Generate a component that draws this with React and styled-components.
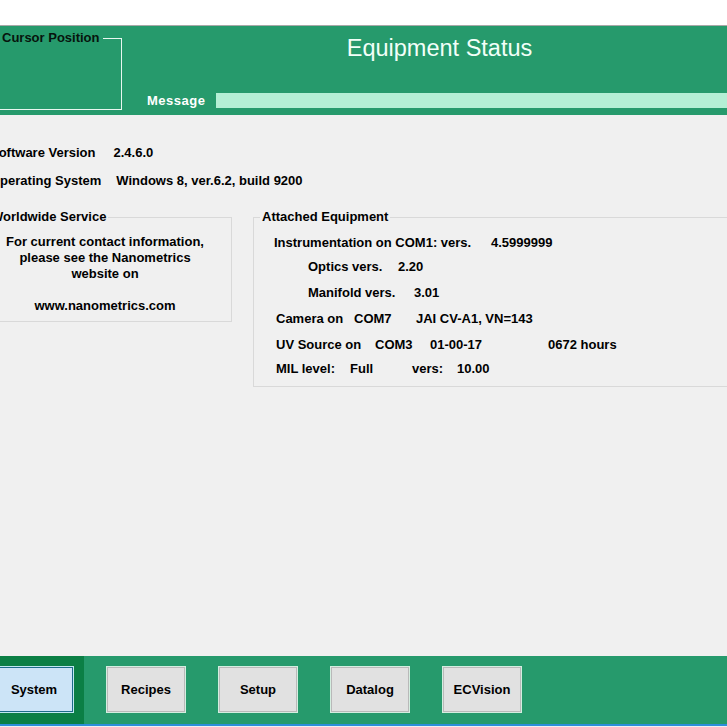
import React from "react";
import styled, { createGlobalStyle } from "styled-components";

const GlobalStyle = createGlobalStyle`
  html, body { margin: 0; padding: 0; background: #ffffff; }
  body { font-family: "Liberation Sans", Arial, sans-serif; overflow: hidden; }
  * { box-sizing: border-box; }
`;

const Screen = styled.div`
  width: 727px;
  height: 727px;
  overflow: hidden;
  background: #ffffff;
`;

const Window = styled.div`
  width: 749px;
  height: 727px;
  margin-left: -22px;
  display: flex;
  flex-direction: column;
  background: #f0f0f0;
`;

const TopStrip = styled.div`
  flex: none;
  height: 26px;
  background: #ffffff;
  border-bottom: 1px solid #a8a8a8;
`;

const Header = styled.header`
  flex: none;
  height: 89px;
  background: #269a6c;
  display: grid;
  grid-template-columns: 144px 1fr;
`;

const CursorGroup = styled.fieldset`
  box-sizing: content-box;
  margin: 5px 0 0 0;
  padding: 0;
  height: 77px;
  min-width: 0;
  border: 1px solid #e9f7f0;
  border-left: none;
`;

const Legend = styled.legend`
  margin-left: ${(p) => p.$indent}px;
  padding: 0 ${(p) => p.$pad}px 0 ${(p) => p.$padL || 0}px;
  font: bold 13px/${(p) => p.$lh}px "Liberation Sans", Arial, sans-serif;
  color: ${(p) => p.$color};
  white-space: nowrap;
`;

const HeaderMain = styled.div`
  display: flex;
  flex-direction: column;
`;

const Title = styled.h1`
  margin: 0;
  padding: 9px 0 0 30px;
  text-align: center;
  font: normal 23.5px/26px "Liberation Sans", Arial, sans-serif;
  color: #f2fff8;
`;

const MessageRow = styled.div`
  margin-top: auto;
  margin-bottom: 7px;
  height: 15px;
  display: flex;
  align-items: center;
  padding-left: 25px;
`;

const MessageLabel = styled.span`
  flex: none;
  width: 69px;
  font: bold 13px/15px "Liberation Sans", Arial, sans-serif;
  letter-spacing: 0.5px;
  color: #ffffff;
`;

const MessageBar = styled.div`
  flex: 1;
  height: 15px;
  background: #b4efd5;
`;

const Content = styled.main`
  flex: 1;
  padding: 24px 0 0 0;
  display: flex;
  flex-direction: column;
`;

const InfoRow = styled.div`
  display: flex;
  gap: ${(p) => p.$gap}px;
  padding-left: 12px;
  height: 28px;
  font: bold 13px/28px "Liberation Sans", Arial, sans-serif;
  color: #000;
  white-space: nowrap;
`;

const Groups = styled.div`
  display: flex;
  gap: 21px;
  margin-top: 14px;
  align-items: flex-start;
`;

const Group = styled.fieldset`
  margin: 0;
  min-width: 0;
  width: ${(p) => p.$w}px;
  flex: none;
  padding: ${(p) => p.$pad};
  border: 1px solid #d9d9d9;
  font: bold 13px/16px "Liberation Sans", Arial, sans-serif;
  color: #000;
`;

const CenterText = styled.p`
  margin: 0;
  padding-top: 1px;
  text-align: center;
  white-space: pre-line;
`;

const EqRow = styled.div`
  display: flex;
  height: 24px;
  line-height: 24px;
  margin-top: ${(p) => p.$mt || 0}px;
  padding-left: ${(p) => p.$indent}px;
  white-space: nowrap;
`;

const Cell = styled.span`
  flex: none;
  width: ${(p) => (p.$w ? `${p.$w}px` : "auto")};
`;

const Footer = styled.footer`
  flex: none;
  height: 71px;
  display: flex;
  flex-direction: column;
`;

const ButtonBar = styled.nav`
  height: 68px;
  background: #269a6c;
  display: flex;
  align-items: flex-start;
`;

const ActivePanel = styled.div`
  flex: none;
  width: 106px;
  height: 68px;
  background: #0b7f45;
  padding: 10px 0 0 16px;
  margin-right: 22px;
`;

const Buttons = styled.div`
  display: flex;
  gap: 32px;
  padding-top: 10px;
`;

const NavButton = styled.button`
  width: 80px;
  height: 47px;
  padding: 0;
  font: bold 13px "Liberation Sans", Arial, sans-serif;
  color: #000;
  background: ${(p) => (p.$active ? "#cce4f7" : "#e1e1e1")};
  border: 1px solid ${(p) => (p.$active ? "#bfe8f0" : "#d4eee0")};
  box-shadow: inset 0 0 0 1px ${(p) => (p.$active ? "#1d6a8a" : "#b9b9b9")};
  cursor: pointer;
`;

const BlueLine = styled.div`
  height: 2px;
  background: #2e8edb;
`;

const BottomGap = styled.div`
  height: 1px;
  background: #f0f0f0;
`;

export default function App() {
  return (
    <Screen>
      <GlobalStyle />
      <Window>
        <TopStrip />
        <Header>
          <CursorGroup>
            <Legend $indent={21} $pad={3} $padL={3} $lh={14} $color="#07140d">
              Cursor Position
            </Legend>
          </CursorGroup>
          <HeaderMain>
            <Title>Equipment Status</Title>
            <MessageRow>
              <MessageLabel>Message</MessageLabel>
              <MessageBar />
            </MessageRow>
          </HeaderMain>
        </Header>

        <Content>
          <InfoRow $gap={18}>
            <span>Software Version</span>
            <span>2.4.6.0</span>
          </InfoRow>
          <InfoRow $gap={15}>
            <span>Operating System</span>
            <span>Windows 8, ver.6.2, build 9200</span>
          </InfoRow>

          <Groups>
            <Group $w={254} $pad="8px 0 7px 0">
              <Legend $indent={10} $pad={2} $padL={2} $lh={16} $color="#000">
                Worldwide Service
              </Legend>
              <CenterText>
                {"For current contact information,\nplease see the Nanometrics\nwebsite on\n\nwww.nanometrics.com"}
              </CenterText>
            </Group>

            <Group $w={520} $pad="6px 0 5px 0">
              <Legend $indent={6} $pad={2} $padL={2} $lh={16} $color="#000">
                Attached Equipment
              </Legend>
              <EqRow $indent={20}>
                <Cell $w={217}>Instrumentation on COM1: vers.</Cell>
                <Cell>4.5999999</Cell>
              </EqRow>
              <EqRow $indent={54}>
                <Cell $w={90}>Optics vers.</Cell>
                <Cell>2.20</Cell>
              </EqRow>
              <EqRow $indent={54} $mt={2}>
                <Cell $w={106}>Manifold vers.</Cell>
                <Cell>3.01</Cell>
              </EqRow>
              <EqRow $indent={22} $mt={2}>
                <Cell $w={78}>Camera on</Cell>
                <Cell $w={62}>COM7</Cell>
                <Cell>JAI CV-A1, VN=143</Cell>
              </EqRow>
              <EqRow $indent={22} $mt={2}>
                <Cell $w={99}>UV Source on</Cell>
                <Cell $w={55}>COM3</Cell>
                <Cell $w={118}>01-00-17</Cell>
                <Cell>0672 hours</Cell>
              </EqRow>
              <EqRow $indent={22}>
                <Cell $w={74}>MIL level:</Cell>
                <Cell $w={62}>Full</Cell>
                <Cell $w={45}>vers:</Cell>
                <Cell>10.00</Cell>
              </EqRow>
            </Group>
          </Groups>
        </Content>

        <Footer>
          <ButtonBar>
            <ActivePanel>
              <NavButton $active>System</NavButton>
            </ActivePanel>
            <Buttons>
              <NavButton>Recipes</NavButton>
              <NavButton>Setup</NavButton>
              <NavButton>Datalog</NavButton>
              <NavButton>ECVision</NavButton>
            </Buttons>
          </ButtonBar>
          <BlueLine />
          <BottomGap />
        </Footer>
      </Window>
    </Screen>
  );
}
